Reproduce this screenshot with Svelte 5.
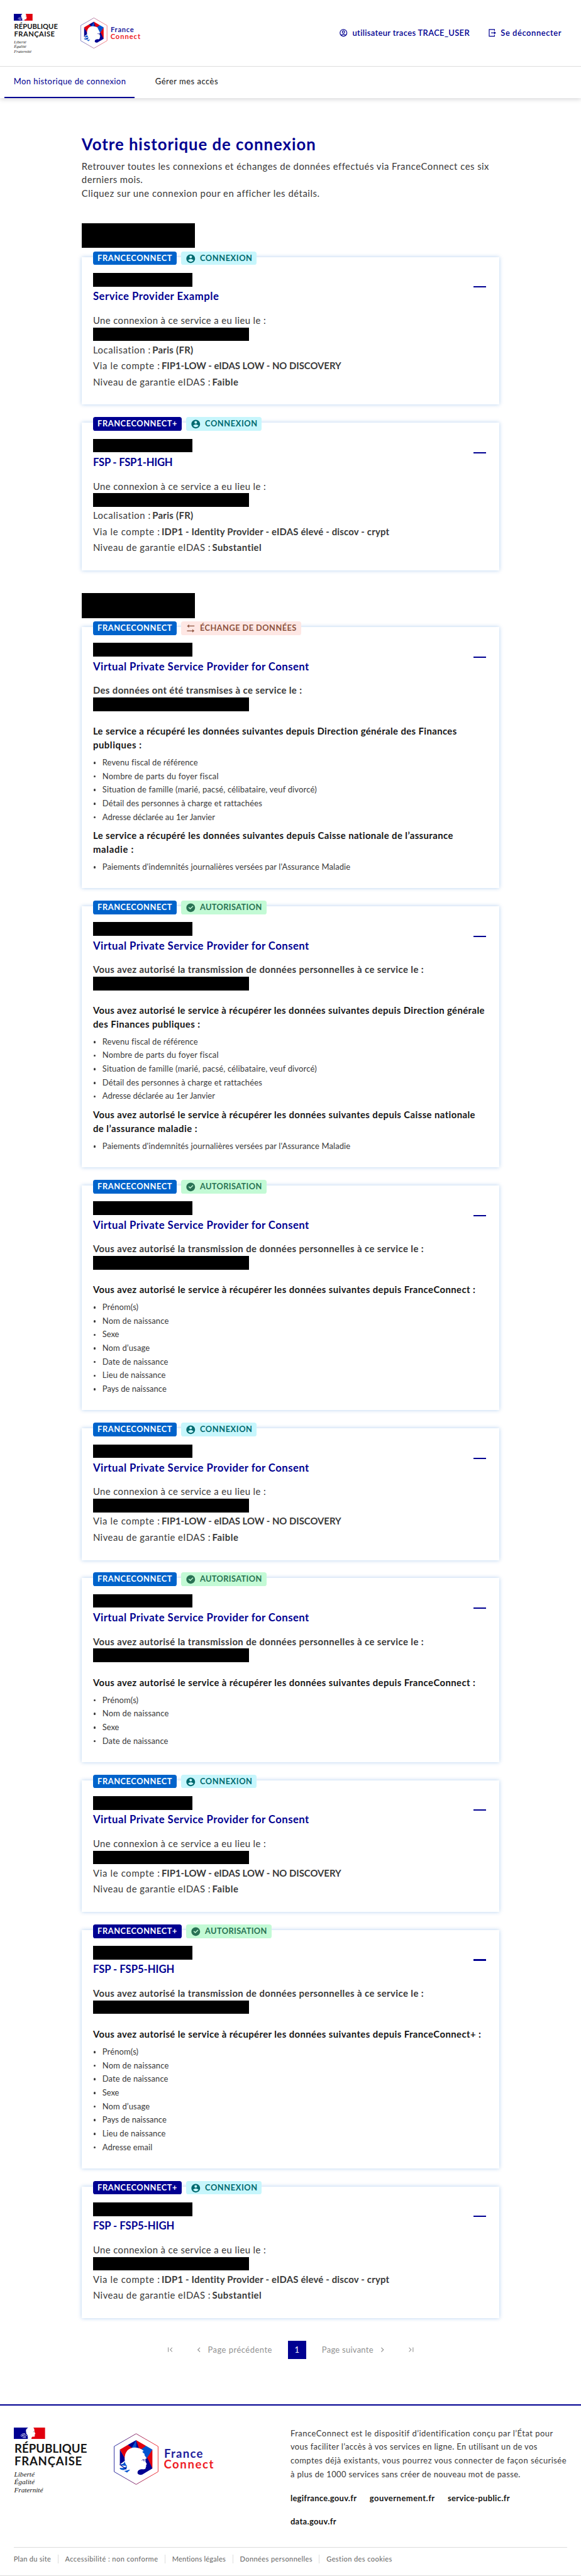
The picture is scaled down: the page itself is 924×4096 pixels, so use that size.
<script>
  // One rem is ten design units; every width below is in design units.
  function fit(node, width) {
    const unit = parseFloat(getComputedStyle(document.documentElement).fontSize) / 10;
    const count = node.textContent.length;
    const spacing = ((width - 0.5) * unit - node.getBoundingClientRect().width) / Math.max(count - 1, 1);
    node.style.letterSpacing = `${spacing}px`;
    node.style.marginRight = `${-spacing}px`;
  }

  const W = {
    'FRANCECONNECT': 131.5, 'FRANCECONNECT+': 140.5, 'CONNEXION': 92.5, 'AUTORISATION': 109.5, 'ÉCHANGE DE DONNÉES': 170.5,
    'Service Provider Example': 222, 'FSP - FSP1-HIGH': 141, 'FSP - FSP5-HIGH': 144,
    'Virtual Private Service Provider for Consent': 381,
    'Une connexion à ce service a eu lieu le :': 305,
    'Des données ont été transmises à ce service le :': 368.5,
    'Vous avez autorisé la transmission de données personnelles à ce service le :': 583,
    'Localisation :': 102, 'Paris (FR)': 72.5,
    'Via le compte :': 118, 'FIP1-LOW - eIDAS LOW - NO DISCOVERY': 317,
    'IDP1 - Identity Provider - eIDAS élevé - discov - crypt': 402,
    'Niveau de garantie eIDAS :': 207.5, 'Faible': 46.5, 'Substantiel': 87.5,
    'Le service a récupéré les données suivantes depuis Direction générale des Finances': 641.5,
    'publiques :': 86,
    'Le service a récupéré les données suivantes depuis Caisse nationale de l’assurance': 635,
    'maladie :': 72,
    'Vous avez autorisé le service à récupérer les données suivantes depuis Direction générale': 690.5,
    'des Finances publiques :': 189,
    'Vous avez autorisé le service à récupérer les données suivantes depuis Caisse nationale': 674,
    'de l’assurance maladie :': 184,
    'Vous avez autorisé le service à récupérer les données suivantes depuis FranceConnect :': 674,
    'Vous avez autorisé le service à récupérer les données suivantes depuis FranceConnect+ :': 684,
    'Revenu fiscal de référence': 168.5, 'Nombre de parts du foyer fiscal': 205,
    'Situation de famille (marié, pacsé, célibataire, veuf divorcé)': 378.5,
    'Détail des personnes à charge et rattachées': 281.5, 'Adresse déclarée au 1er Janvier': 199,
    "Paiements d'indemnités journalières versées par l'Assurance Maladie": 437.5,
    'Prénom(s)': 64, 'Nom de naissance': 117.5, 'Sexe': 30, 'Nom d’usage': 84, 'Date de naissance': 116.5,
    'Lieu de naissance': 112, 'Pays de naissance': 113.5, 'Adresse email': 88.5
  };

  const VPS = 'Virtual Private Service Provider for Consent';
  const login = 'Une connexion à ce service a eu lieu le :';
  const consent = 'Vous avez autorisé la transmission de données personnelles à ce service le :';
  const place = ['Localisation :', 'Paris (FR)'];
  const low = ['Via le compte :', 'FIP1-LOW - eIDAS LOW - NO DISCOVERY'];
  const idp = ['Via le compte :', 'IDP1 - Identity Provider - eIDAS élevé - discov - crypt'];
  const weak = ['Niveau de garantie eIDAS :', 'Faible'];
  const strong = ['Niveau de garantie eIDAS :', 'Substantiel'];
  const tax = ['Revenu fiscal de référence', 'Nombre de parts du foyer fiscal', 'Situation de famille (marié, pacsé, célibataire, veuf divorcé)', 'Détail des personnes à charge et rattachées', 'Adresse déclarée au 1er Janvier'];
  const health = ["Paiements d'indemnités journalières versées par l'Assurance Maladie"];
  const allowed = 'Vous avez autorisé le service à récupérer les données suivantes depuis ';

  const groups = [
    [
      { kind: 'connexion', title: 'Service Provider Example', intro: login, facts: [place, low, weak] },
      { plus: true, kind: 'connexion', title: 'FSP - FSP1-HIGH', intro: login, facts: [place, idp, strong] }
    ],
    [
      { kind: 'echange', title: VPS, intro: 'Des données ont été transmises à ce service le :', claims: [
        { head: ['Le service a récupéré les données suivantes depuis Direction générale des Finances', 'publiques :'], items: tax },
        { head: ['Le service a récupéré les données suivantes depuis Caisse nationale de l’assurance', 'maladie :'], items: health }
      ] },
      { kind: 'autorisation', title: VPS, intro: consent, claims: [
        { head: [allowed + 'Direction générale', 'des Finances publiques :'], items: tax },
        { head: [allowed + 'Caisse nationale', 'de l’assurance maladie :'], items: health }
      ] },
      { kind: 'autorisation', title: VPS, intro: consent, claims: [
        { head: [allowed + 'FranceConnect :'], items: ['Prénom(s)', 'Nom de naissance', 'Sexe', 'Nom d’usage', 'Date de naissance', 'Lieu de naissance', 'Pays de naissance'] }
      ] },
      { kind: 'connexion', title: VPS, intro: login, facts: [low, weak] },
      { kind: 'autorisation', title: VPS, intro: consent, claims: [
        { head: [allowed + 'FranceConnect :'], items: ['Prénom(s)', 'Nom de naissance', 'Sexe', 'Date de naissance'] }
      ] },
      { kind: 'connexion', title: VPS, intro: login, facts: [low, weak] },
      { plus: true, kind: 'autorisation', title: 'FSP - FSP5-HIGH', intro: consent, claims: [
        { head: [allowed + 'FranceConnect+ :'], items: ['Prénom(s)', 'Nom de naissance', 'Date de naissance', 'Sexe', 'Nom d’usage', 'Pays de naissance', 'Lieu de naissance', 'Adresse email'] }
      ] },
      { plus: true, kind: 'connexion', title: 'FSP - FSP5-HIGH', intro: login, facts: [idp, strong] }
    ]
  ];

  const labels = { connexion: 'CONNEXION', autorisation: 'AUTORISATION', echange: 'ÉCHANGE DE DONNÉES' };
  const icons = {
    connexion: 'M12 2C17.52 2 22 6.48 22 12C22 17.52 17.52 22 12 22C6.48 22 2 17.52 2 12C2 6.48 6.48 2 12 2ZM6.02 15.42C7.49 17.61 9.69 19 12.16 19C14.63 19 16.83 17.61 18.3 15.42C16.69 13.92 14.54 13 12.16 13C9.78 13 7.63 13.92 6.02 15.42ZM12 11C13.66 11 15 9.66 15 8C15 6.34 13.66 5 12 5C10.34 5 9 6.34 9 8C9 9.66 10.34 11 12 11Z',
    autorisation: 'M12 22C6.48 22 2 17.52 2 12C2 6.48 6.48 2 12 2C17.52 2 22 6.48 22 12C22 17.52 17.52 22 12 22ZM11 16L18.07 8.93L16.66 7.52L11 13.17L8.17 10.34L6.76 11.76L11 16Z',
    echange: 'M3.5 6.5L8.2 2.6V5.6H20.5V7.4H8.2V10.4ZM20.5 17.5L15.8 13.6V16.6H3.5V18.4H15.8V21.4Z'
  };
  const pageIcons = {
    first: 'M12.2 12L17 16.8L15.8 18L9.8 12L15.8 6L17 7.2ZM5 6H6.8V18H5Z',
    prev: 'M10.83 12L15.78 16.95L14.36 18.36L8 12L14.36 5.64L15.78 7.05Z',
    next: 'M13.17 12L8.22 7.05L9.64 5.64L16 12L9.64 18.36L8.22 16.95Z',
    last: 'M11.8 12L7 7.2L8.2 6L14.2 12L8.2 18L7 16.8ZM17.2 6H19V18H17.2Z'
  };
  const legal = [['Plan du site', 66], ['Accessibilité : non conforme', 164], ['Mentions légales', 95], ['Données personnelles', 128], ['Gestion des cookies', 116]];
</script>

{#snippet text(value, width)}<span class="fit" use:fit={width ?? W[value]}>{value}</span>{/snippet}

{#snippet icon(d)}<svg class="icon" viewBox="0 0 24 24" aria-hidden="true"><path fill="currentColor" fill-rule="evenodd" {d} /></svg>{/snippet}

{#snippet republic()}
  <svg class="republic" viewBox="0 0 132 118" role="img" aria-label="République Française">
    <path fill="#000091" d="M0 0H30V20H0Z" />
    <path fill="#e1000f" d="M30 0H55V20H30Z" />
    <path fill="#fff" d="M25.3 0C22.5 1.6 21.1 3.6 21.3 6C21.4 8 22.4 8.6 21.6 9.6C22.6 11.5 23.4 13 24.6 13.6C24.2 15 25 16.4 24.6 20H31C31 18.4 31.4 16.4 33 16C35 16.2 37 16.4 37 15L36.8 12.6L38 10.8L36.4 7.6C36.6 5.4 35.8 4.2 36.2 3C35.6 1.4 34.4.6 34.6 0Z" />
    <path fill="none" stroke="#fff" stroke-width=".9" d="M12 14C14 11.4 17 10 20 10.8M14.5 14.2C17 12 20 12.4 24 14.6M12.5 15.6C15 14 18 14.4 21 16.4M15.5 17.4L21 17.6" />
    <path fill="none" stroke="#222" stroke-width=".6" d="M34 7.6L35.8 7.2" />
    <g fill="#161616" class="caps">
      <text x="1" y="44" textLength="128" lengthAdjust="spacing">RÉPUBLIQUE</text>
      <text x="1" y="66" textLength="119" lengthAdjust="spacing">FRANÇAISE</text>
    </g>
    <g fill="#161616" class="motto">
      <text x=".5" y="86" textLength="36">Liberté</text>
      <text x=".5" y="100" textLength="36">Égalité</text>
      <text x=".5" y="114" textLength="51">Fraternité</text>
    </g>
  </svg>
{/snippet}

{#snippet franceConnect()}
  <svg class="fc" viewBox="0 0 178 91" role="img" aria-label="FranceConnect">
    <defs>
      <linearGradient id="edge" x1="0" x2="1" y1="0" y2="0">
        <stop offset=".08" stop-color="#1c1c96" />
        <stop offset=".92" stop-color="#ee1c25" />
      </linearGradient>
    </defs>
    <g transform="translate(-6 -4.5) scale(.3333)">
      <path fill="#fff" stroke="url(#edge)" stroke-width="3" d="M136 16L252 83V217L136 284L20 217V83Z" />
      <path fill="#000091" d="M50 100L90 165L50 185ZM92 75L136 50V100H105Z" />
      <path fill="#e1000f" d="M50 100L92 75L120 95L80 152Z" />
      <path fill="#0053d0" d="M136 50V100H108Z" />
      <path fill="#000091" d="M136 50L156 84L150 100H136Z" />
      <path fill="#e1000f" d="M136 50L188 80L168 108L150 92Z" />
      <path fill="#0053d0" d="M188 80L222 100L196 152L160 100Z" />
      <path fill="#e1000f" d="M222 100V200L190 150Z" />
      <path fill="#000091" d="M196 145L222 200L168 232C156 236 142 232 143 220C145 206 158 202 176 204L186 198L184 150Z" />
      <path fill="#fff" d="M76 160C72 124 86 96 118 90C140 88 158 92 176 107L168 112L180 122C182 132 176 134 182 143C188 152 184 160 186 165L193 177L188 181L190 188L186 192C188 200 182 205 172 203C156 200 144 208 143 220L120 250L84 235L50 200V178Z" />
      <path fill="none" stroke="#000091" stroke-width="3" d="M166 158C170 152 174 152 182 154M176 154L178 162" />
      <path fill="#0053d0" d="M50 176C60 180 70 176 76 164C78 176 86 184 88 186L60 184ZM50 196C66 200 78 194 86 186C90 196 84 204 74 206C66 210 56 206 50 202ZM72 212C84 214 92 206 104 206C98 214 92 214 88 222C86 218 78 218 72 212Z" />
      <path fill="none" stroke="#000091" stroke-width="4" d="M50 178C60 190 70 192 84 204" />
    </g>
    <text x="88.6" y="43" fill="#1c1c9c" textLength="68">France</text>
    <text x="88" y="62" fill="#ee1c25" textLength="87.5">Connect</text>
  </svg>
{/snippet}

<div class="page">
  <header>
    <div class="brand">
      <div class="logos">{@render republic()}{@render franceConnect()}</div>
      <div class="tools">
        <span class="tool">
          <svg class="icon" viewBox="0 0 24 24" fill="none" stroke="currentColor" stroke-width="2"><circle cx="12" cy="12" r="9" /><circle cx="12" cy="10" r="3.1" /><path d="M6.2 18.2C8 15.4 16 15.4 17.8 18.2" /></svg>
          {@render text('utilisateur traces TRACE_USER', 207)}
        </span>
        <span class="tool">
          <svg class="icon" viewBox="0 0 24 24" fill="none" stroke="currentColor" stroke-width="2"><path d="M19 6.5V3H5V21H19V17.5" /><path d="M10 12H19" /><path fill="currentColor" stroke="none" d="M18 8L23 12L18 16Z" /></svg>
          {@render text('Se déconnecter', 107)}
        </span>
      </div>
    </div>
    <nav>
      <a class="active" href="#historique">{@render text('Mon historique de connexion', 198)}</a>
      <a href="#acces">{@render text('Gérer mes accès', 111)}</a>
    </nav>
  </header>

  <main>
    <h1>{@render text('Votre historique de connexion', 412.5)}</h1>
    <p class="lead">
      {@render text('Retrouver toutes les connexions et échanges de données effectués via FranceConnect ces six', 717.5)}<br />
      {@render text('derniers mois.', 108)}<br />
      {@render text('Cliquez sur une connexion pour en afficher les détails.', 418.5)}
    </p>

    {#each groups as cards}
      <section>
        <div class="mask month"></div>
        {#each cards as card}
          <article>
            <div class="badges">
              <span class="badge" class:plus={card.plus}>{@render text(card.plus ? 'FRANCECONNECT+' : 'FRANCECONNECT')}</span>
              <span class="badge {card.kind}">{@render icon(icons[card.kind])}{@render text(labels[card.kind])}</span>
            </div>
            <div class="top">
              <div>
                <div class="mask day"></div>
                <h2>{@render text(card.title)}</h2>
              </div>
              <span class="minus"></span>
            </div>
            <p class="intro" class:bold={card.claims}>{@render text(card.intro)}</p>
            <div class="mask time"></div>
            {#each card.facts ?? [] as [label, value]}
              <p class="fact">{@render text(label)}<b>{@render text(value)}</b></p>
            {/each}
            {#if card.claims}
              <div class="claims">
                {#each card.claims as claim}
                  <h3>{#each claim.head as line}<span class="line">{@render text(line)}</span>{/each}</h3>
                  <ul>{#each claim.items as item}<li>{@render text(item)}</li>{/each}</ul>
                {/each}
              </div>
            {/if}
          </article>
        {/each}
      </section>
    {/each}

    <div class="pagination">
      {@render icon(pageIcons.first)}
      <span class="step prev">{@render icon(pageIcons.prev)}{@render text('Page précédente', 113.5)}</span>
      <span class="current">1</span>
      <span class="step next">{@render text('Page suivante', 91)}{@render icon(pageIcons.next)}</span>
      {@render icon(pageIcons.last)}
    </div>
  </main>

  <footer>
    <div class="about">
      <div class="logos">{@render republic()}{@render franceConnect()}</div>
      <div class="info">
        <p>
          {@render text('FranceConnect est le dispositif d’identification conçu par l’État pour', 463.5)}<br />
          {@render text('vous faciliter l’accès à vos services en ligne. En utilisant un de vos', 435.5)}<br />
          {@render text('comptes déjà existants, vous pourrez vous connecter de façon sécurisée', 486.5)}<br />
          {@render text('à plus de 1000 services sans créer de nouveau mot de passe.', 405.5)}
        </p>
        <div class="sites">
          {@render text('legifrance.gouv.fr', 117)}
          {@render text('gouvernement.fr', 115)}
          {@render text('service-public.fr', 110)}
          {@render text('data.gouv.fr', 81)}
        </div>
      </div>
    </div>
    <div class="legal">
      {#each legal as [name, width]}<span class="entry">{@render text(name, width)}</span>{/each}
    </div>
  </footer>
</div>

<style>
  :global(html) { font-size: 9.026px; }
  :global(body) { margin: 0; background: #fff; }
  .page {
    height: 4096px;
    box-sizing: border-box;
    border-bottom: 1px solid #ddd;
    font-family: Lato, 'Open Sans', sans-serif;
    font-size: 1.65rem;
    line-height: 2.4rem;
    color: #3a3a3a;
    overflow: hidden;
  }
  p, h1, h2, h3, ul { margin: 0; padding: 0; }
  .fit { display: inline-block; white-space: nowrap; }
  .icon { display: block; flex: none; width: 1.6rem; height: 1.6rem; }

  header { height: 17.3rem; box-shadow: 0 .2rem .8rem rgba(0, 0, 18, .16); }
  .brand { display: flex; justify-content: space-between; box-sizing: border-box; height: 11.75rem; padding: 2.4rem 3.5rem 0 2.4rem; border-bottom: 1px solid #ddd; }
  .logos { display: flex; align-items: flex-start; }
  .republic { width: 13.2rem; height: 11.8rem; }
  .caps { font: 700 20.6px Lato, sans-serif; }
  .motto { font: italic 12.5px 'Liberation Serif', serif; }
  .fc { width: 17.8rem; height: 9.1rem; margin: 1.15rem 0 0 4.5rem; font: 700 20.6px Lato, sans-serif; }
  .brand .republic { width: 7.92rem; height: 7.08rem; }
  .brand .fc { width: 10.68rem; height: 5.46rem; margin: .66rem 0 0 3.85rem; }
  .tools { display: flex; gap: 3.1rem; padding-top: 2.2rem; font-size: 1.44rem; font-weight: 600; color: #000091; }
  .tool { display: flex; align-items: center; gap: .8rem; height: 2.4rem; }
  nav { display: flex; height: 5.55rem; padding-left: .8rem; }
  nav a { box-sizing: border-box; padding: 1.4rem 1.6rem 0; margin-right: 2rem; border-bottom: .23rem solid transparent; font-size: 1.44rem; color: #161616; text-decoration: none; }
  nav a.active { color: #000091; border-color: #000091; }

  main { width: 73.6rem; margin: 0 auto; padding-top: 6.3rem; }
  h1 { font-size: 2.85rem; line-height: 3.6rem; color: #000091; }
  .lead { margin-top: .9rem; }
  section { margin-top: 4rem; }
  .mask { background: #000; height: 2.4rem; }
  .month { width: 20rem; height: 4.4rem; margin-bottom: 1.6rem; }
  .day { width: 17.5rem; }
  .time { width: 27.5rem; }

  article { position: relative; box-sizing: border-box; padding: 2.8rem 2.4rem 2.8rem 2rem; background: #fff; box-shadow: 0 0 .7rem rgba(0, 99, 203, .3); }
  article:has(.claims) { padding-bottom: 1.6rem; }
  article + article { margin-top: 3.2rem; }
  .badges { position: absolute; top: -1rem; left: 2rem; display: flex; gap: .8rem; }
  .badge { display: flex; align-items: center; height: 2.4rem; padding: 0 .8rem; border-radius: .4rem; background: #0063cb; color: #fff; font-size: 1.42rem; font-weight: 700; }
  .badge .icon { width: 1.84rem; height: 1.84rem; margin: .1rem .75rem 0 -.05rem; }
  .badge.plus { background: #000091; }
  .badge.connexion { background: #c7f6fc; color: #006a6f; }
  .badge.autorisation { background: #c3fad5; color: #297254; }
  .badge.echange { background: #fee7e4; color: #8d533e; }
  .top { display: flex; justify-content: space-between; }
  h2 { margin-top: .4rem; font-size: 1.85rem; line-height: 2.8rem; color: #000091; }
  .minus { width: 2.2rem; height: .23rem; margin-top: 2.36rem; background: #000091; }
  .intro { margin-top: 1.6rem; }
  .bold { font-weight: 700; }
  .fact { display: flex; gap: .33rem; margin-top: .4rem; }
  .claims { padding-top: 2.4rem; }
  h3 { font-size: 1.65rem; line-height: 2.4rem; color: #161616; }
  .line { display: block; }
  ul { list-style: none; padding: .8rem 0; font-size: 1.44rem; line-height: 2rem; }
  li { display: flex; align-items: flex-start; padding-bottom: .4rem; }
  li::before { content: ''; width: .4rem; height: .4rem; margin: .9rem 1.15rem 0 .1rem; border-radius: 50%; background: #3a3a3a; }

  .pagination { display: flex; align-items: center; justify-content: center; margin-top: 4rem; font-size: 1.44rem; color: #929292; }
  .step { display: flex; align-items: center; gap: .8rem; }
  .prev { margin: 0 2.8rem 0 3.4rem; }
  .next { margin: 0 3.4rem 0 2.8rem; }
  .current { width: 3.2rem; line-height: 3.2rem; background: #000091; color: #f5f5fe; text-align: center; }

  footer { margin-top: 8rem; border-top: 2px solid #000091; font-size: 1.44rem; }
  .about { display: flex; justify-content: space-between; box-sizing: border-box; height: 25rem; margin: 0 2.4rem; padding-top: 3.7rem; border-bottom: 1px solid #ddd; }
  .about .republic { margin-top: .1rem; }
  .info { width: 48.8rem; }
  .sites { display: flex; flex-wrap: wrap; gap: 1.8rem 2.3rem; margin-top: 1.8rem; font-weight: 700; color: #161616; }
  .legal { display: flex; margin: 1.2rem 2.4rem 0; font-size: 1.23rem; line-height: 1.6rem; color: #666; }
  .entry + .entry { margin-left: 1.2rem; padding-left: 1.2rem; border-left: 1px solid #ddd; }
</style>
